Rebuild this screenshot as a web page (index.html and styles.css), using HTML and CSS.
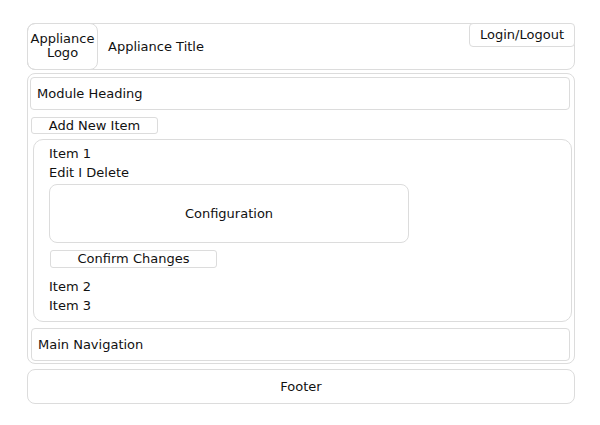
FILE: index.html
```html
<!DOCTYPE html>
<html lang="en">
<head>
    <meta charset="UTF-8">
    <title>Appliance</title>
    <link rel="stylesheet" href="styles.css">
</head>
<body>
    <div class="page">
        <header class="header">
            <div class="logo">Appliance<br>Logo</div>
            <div class="title">Appliance Title</div>
            <div class="btn login">Login/Logout</div>
        </header>

        <main class="main">
            <div class="module-heading">Module Heading</div>
            <div class="btn add-item">Add New Item</div>

            <div class="items">
                <div class="line">Item 1</div>
                <div class="line">Edit I Delete</div>
                <div class="config">Configuration</div>
                <div class="btn confirm">Confirm Changes</div>
                <div class="line item-gap">Item 2</div>
                <div class="line">Item 3</div>
            </div>

            <nav class="main-nav">Main Navigation</nav>
        </main>

        <footer class="footer">Footer</footer>
    </div>
</body>
</html>
```

FILE: styles.css
```css
* {
  box-sizing: border-box;
  margin: 0;
  padding: 0;
}

body {
  background: #fff;
  color: #111;
  font-family: "DejaVu Sans", Verdana, sans-serif;
  font-size: 13px;
  line-height: 18px;
}

.page {
  width: 548px;
  margin: 23px 0 0 27px;
  display: flex;
  flex-direction: column;
}

.btn {
  border: 1px solid #dcdcdc;
  border-radius: 3px;
  text-align: center;
  background: #fff;
}

/* header */
.header {
  height: 47px;
  border: 1px solid #dcdcdc;
  border-radius: 8px;
  display: flex;
  align-items: flex-start;
}

.logo {
  width: 71px;
  height: 47px;
  margin: -1px 0 0 -1px;
  border: 1px solid #dcdcdc;
  border-radius: 8px;
  text-align: center;
  line-height: 14px;
  padding-top: 8px;
}

.title {
  align-self: center;
  margin-left: 10px;
}

.login {
  margin: -1px -1px 0 auto;
  width: 106px;
  height: 24px;
  line-height: 21px;
  border-radius: 4px;
}

/* main */
.main {
  margin-top: 3px;
  border: 1px solid #dcdcdc;
  border-radius: 8px;
  padding: 3px 4px 2px 2px;
  display: flex;
  flex-direction: column;
  align-items: flex-start;
}

.module-heading {
  width: 540px;
  height: 33px;
  border: 1px solid #dcdcdc;
  border-radius: 4px;
  padding-left: 6px;
  line-height: 31px;
}

.add-item {
  margin: 7px 0 0 1px;
  width: 127px;
  height: 17px;
  line-height: 15px;
}

.items {
  margin: 5px 0 0 3px;
  width: 539px;
  height: 183px;
  border: 1px solid #dcdcdc;
  border-radius: 10px;
  padding: 4px 0 0 15px;
}

.line {
  line-height: 19px;
}

.config {
  margin-top: 2px;
  width: 360px;
  height: 59px;
  border: 1px solid #dcdcdc;
  border-radius: 8px;
  display: flex;
  align-items: center;
  justify-content: center;
}

.confirm {
  margin: 7px 0 0 1px;
  width: 167px;
  height: 18px;
  line-height: 16px;
}

.item-gap {
  margin-top: 9px;
}

.main-nav {
  margin: 6px 0 0 1px;
  width: 539px;
  height: 33px;
  border: 1px solid #dcdcdc;
  border-radius: 4px;
  padding-left: 6px;
  line-height: 31px;
}

/* footer */
.footer {
  margin-top: 5px;
  height: 35px;
  border: 1px solid #dcdcdc;
  border-radius: 8px;
  text-align: center;
  line-height: 33px;
}
```
